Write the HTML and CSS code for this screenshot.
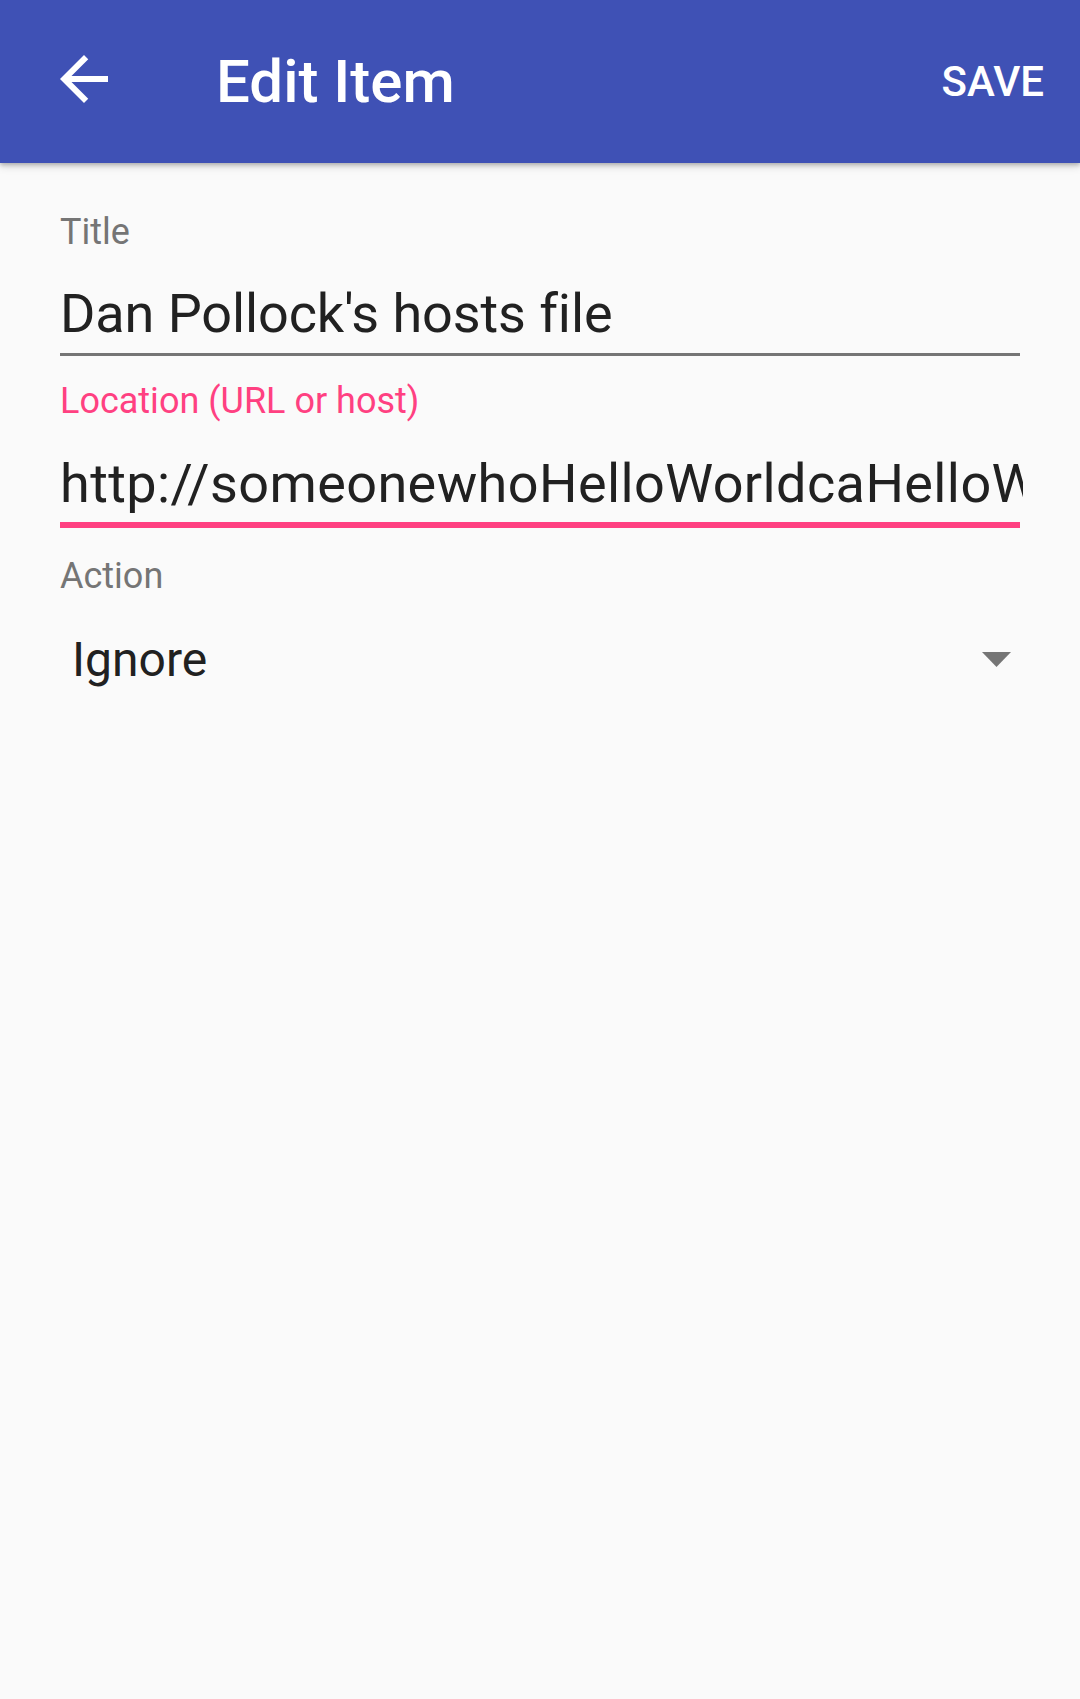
FILE: index.html
```html
<!DOCTYPE html>
<html lang="en">
<head>
<meta charset="utf-8">
<title>Edit Item</title>
<link rel="stylesheet" href="styles.css">
</head>
<body>
<div class="app">
  <header class="toolbar">
    <button class="nav-btn" aria-label="Back">
      <svg class="nav-icon" viewBox="0 0 24 24" width="72" height="72"><path d="M20 11H7.83l5.59-5.59L12 4l-8 8 8 8 1.41-1.41L7.83 13H20v-2z" fill="#fff"/></svg>
    </button>
    <h1 class="toolbar-title">Edit Item</h1>
    <button class="action-btn">SAVE</button>
  </header>
  <main class="form">
    <div class="field field-title">
      <div class="label">Title</div>
      <div class="input"><div class="input-text">Dan Pollock's hosts file</div></div>
    </div>
    <div class="field field-location focused">
      <div class="label">Location (URL or host)</div>
      <div class="input"><div class="input-text url-text">http://someonewhoHelloWorldcaHelloW</div></div>
    </div>
    <div class="field field-action">
      <div class="label">Action</div>
      <div class="spinner">
        <span class="spinner-text">Ignore</span>
        <svg class="spinner-arrow" viewBox="0 0 29 15" width="29" height="15"><polygon points="0,0 29,0 14.5,15" fill="#757575"/></svg>
      </div>
    </div>
  </main>
</div>
</body>
</html>
```
FILE: styles.css
```css
html, body {
  margin: 0;
  padding: 0;
  background: #fafafa;
}
body {
  font-family: Roboto, "Noto Sans", "Liberation Sans", sans-serif;
  width: 1080px;
  height: 1699px;
  overflow: hidden;
}
.app {
  height: 1699px;
  background: #fafafa;
}
.toolbar {
  position: relative;
  z-index: 1;
  height: 163px;
  background: #3f51b5;
  display: flex;
  align-items: center;
  box-shadow: 0 2px 4px rgba(0, 0, 0, 0.22), 0 4px 8px rgba(0, 0, 0, 0.12);
}
.nav-btn {
  align-self: flex-start;
  margin: 43px 0 0 48px;
  padding: 0;
  border: 0;
  background: transparent;
  width: 72px;
  height: 72px;
}
.nav-icon {
  display: block;
}
.toolbar-title {
  margin: 0 0 0 96px;
  font-size: 60px;
  line-height: 70px;
  font-weight: 500;
  color: #fff;
  flex: 1;
}
.action-btn {
  border: 0;
  background: transparent;
  padding: 0;
  margin: 0 36px 0 0;
  font-family: inherit;
  font-size: 42px;
  line-height: 49px;
  font-weight: 500;
  color: #fff;
}
.form {
  padding: 48px 60px 0 60px;
}
.field {
  display: flex;
  flex-direction: column;
}
.label {
  font-size: 36px;
  line-height: 42px;
  color: #757575;
}
.input {
  padding: 29px 0 8px 0;
  border-bottom: 3px solid #757575;
  font-size: 54px;
  line-height: 63px;
  color: #212121;
}
.input-text {
  white-space: nowrap;
  overflow: hidden;
  margin-right: -3px;
  letter-spacing: -0.1px;
}
.url-text {
  letter-spacing: 0.4px;
}
.field-location {
  margin-top: 24px;
}
.field-location .label {
  color: #ff4081;
}
.field-location .input {
  padding: 30px 0 7px 0;
  border-bottom: 6px solid #ff4081;
}
.field-action {
  margin-top: 27px;
}
.spinner {
  margin-top: 35px;
  height: 56px;
  display: flex;
  align-items: center;
  justify-content: space-between;
  padding: 0 9px 0 12px;
}
.spinner-text {
  font-size: 48px;
  line-height: 56px;
  color: #212121;
}
.spinner-arrow {
  display: block;
  margin-top: -2px;
}
```
